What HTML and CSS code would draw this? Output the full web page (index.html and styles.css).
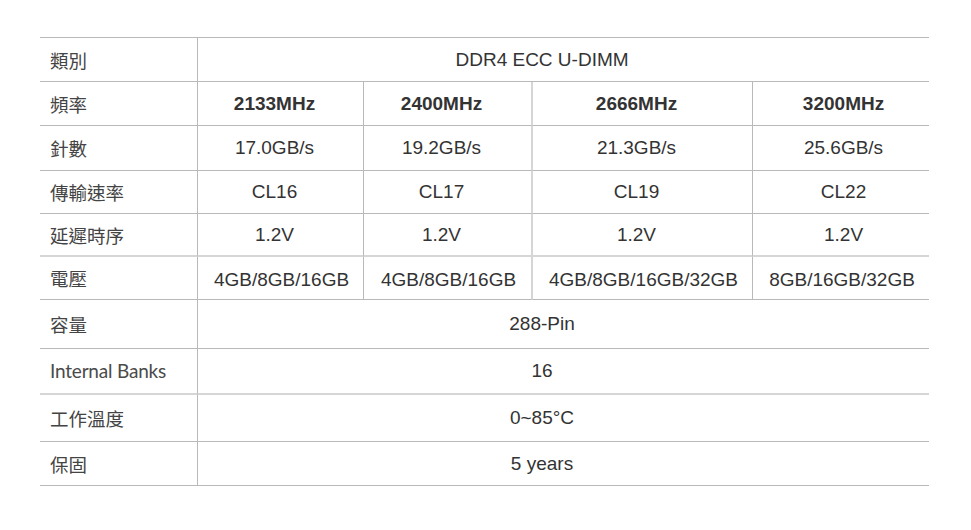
FILE: index.html
```html
<!DOCTYPE html>
<html lang="zh-Hant">
<head>
<meta charset="utf-8">
<title>DDR4 ECC U-DIMM</title>
<link rel="stylesheet" href="styles.css">
</head>
<body>
<table class="spec">
  <colgroup>
    <col class="c-label">
    <col class="c-a">
    <col class="c-b">
    <col class="c-c">
    <col class="c-d">
  </colgroup>
  <tbody>
    <tr class="r44">
      <td class="label">類別</td>
      <td class="span" colspan="4">DDR4 ECC U-DIMM</td>
    </tr>
    <tr class="r44">
      <td class="label">頻率</td>
      <td class="val bold">2133MHz</td>
      <td class="val bold">2400MHz</td>
      <td class="val bold soft">2666MHz</td>
      <td class="val last bold">3200MHz</td>
    </tr>
    <tr class="r45">
      <td class="label">針數</td>
      <td class="val">17.0GB/s</td>
      <td class="val">19.2GB/s</td>
      <td class="val soft">21.3GB/s</td>
      <td class="val last">25.6GB/s</td>
    </tr>
    <tr class="r43">
      <td class="label">傳輸速率</td>
      <td class="val">CL16</td>
      <td class="val">CL17</td>
      <td class="val soft">CL19</td>
      <td class="val last">CL22</td>
    </tr>
    <tr class="r43 light">
      <td class="label">延遲時序</td>
      <td class="val">1.2V</td>
      <td class="val">1.2V</td>
      <td class="val soft">1.2V</td>
      <td class="val last">1.2V</td>
    </tr>
    <tr class="r43 wide">
      <td class="label">電壓</td>
      <td class="val">4GB/8GB/16GB</td>
      <td class="val">4GB/8GB/16GB</td>
      <td class="val soft">4GB/8GB/16GB/32GB</td>
      <td class="val last">8GB/16GB/32GB</td>
    </tr>
    <tr class="r49">
      <td class="label">容量</td>
      <td class="span" colspan="4">288-Pin</td>
    </tr>
    <tr class="r46 light">
      <td class="label latin">Internal Banks</td>
      <td class="span" colspan="4">16</td>
    </tr>
    <tr class="r47">
      <td class="label">工作溫度</td>
      <td class="span" colspan="4">0~85°C</td>
    </tr>
    <tr class="r44">
      <td class="label">保固</td>
      <td class="span" colspan="4">5 years</td>
    </tr>
  </tbody>
</table>
</body>
</html>
```

FILE: styles.css
```css
html, body {
  margin: 0;
  padding: 0;
  background: #ffffff;
}

.spec {
  margin: 37px 0 0 40px;
  width: 889px;
  table-layout: fixed;
  border-collapse: separate;
  border-spacing: 0;
  border-top: 1px solid #b9b9b9;
  font-family: "Liberation Sans", Arial, sans-serif;
  font-size: 19px;
  color: #333333;
}

.c-label { width: 157px; }
.c-a { width: 166px; }
.c-b { width: 168px; }
.c-c { width: 221px; }
.c-d { width: 177px; }

.spec td {
  padding: 0;
  vertical-align: middle;
  border-bottom: 1px solid #b9b9b9;
  white-space: nowrap;
  line-height: 22px;
}

.r43 td { height: 42px; }
.r44 td { height: 43px; }
.r45 td { height: 44px; }
.r46 td { height: 45px; }
.r47 td { height: 46px; }
.r49 td { height: 48px; }

.spec tr.light td {
  border-bottom: 2px solid #d6d6d6;
}
.r43.light td { height: 41px; }
.r46.light td { height: 44px; }

.label {
  padding-left: 10px !important;
  text-align: left;
  font-family: "Noto Sans CJK TC", "Noto Sans CJK SC", sans-serif;
  font-size: 18.5px;
  color: #444444;
}

.label.latin {
  font-family: Lato, "Noto Sans", sans-serif;
  font-size: 19px;
  letter-spacing: -0.2px;
  color: #4a4a4a;
}

.val {
  text-align: center;
  border-left: 1px solid #b9b9b9;
  padding-right: 12px !important;
}

.val.soft {
  border-left: 2px solid #d6d6d6;
}

.val.last {
  padding-right: 0 !important;
  padding-left: 5px !important;
}

.spec .wide .val {
  height: 39px;
  padding-top: 3px !important;
  padding-right: 0 !important;
  padding-left: 2px !important;
}

.bold {
  font-weight: bold;
}

.span {
  text-align: center;
  border-left: 1px solid #b9b9b9;
  padding-right: 43px !important;
}
```
